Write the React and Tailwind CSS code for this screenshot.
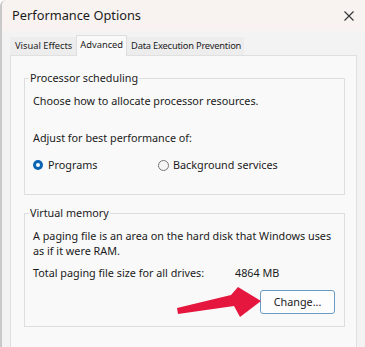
export default function App() {
  return (
    <div className="relative w-[365px] h-[347px] overflow-hidden bg-[#f3f3f3] border-l-2 border-[#c9c9c9] rounded-tl-[6px] flex flex-col text-[#1b1b1b] font-['Noto_Sans',sans-serif]">
      {/* title bar */}
      <div className="h-[31px] shrink-0 bg-[#f8f3f1] flex items-center justify-between pl-[10px] pr-[11px]">
        <span className="text-[12.8px] leading-none">Performance Options</span>
        <svg width="10" height="10" viewBox="0 0 10 10" className="text-[#333]">
          <path d="M0.5 0.5 L9.5 9.5 M9.5 0.5 L0.5 9.5" stroke="currentColor" strokeWidth="1.1" fill="none" />
        </svg>
      </div>
      {/* tabs */}
      <div className="mt-[4px] ml-[8px] flex items-end h-[20px] text-[9.3px] leading-none whitespace-nowrap">
        <div className="h-[18px] pl-[5px] pr-[4px] flex items-center bg-[#ededed]">Visual Effects</div>
        <div className="h-[21px] px-[3px] flex items-center pb-[3px] bg-[#f9f9f9] border border-b-0 border-[#dedede] relative z-10 -mb-[1px]">Advanced</div>
        <div className="h-[18px] pl-[4px] pr-[3px] flex items-center bg-[#ededed] tracking-[-0.2px]">Data Execution Prevention</div>
      </div>
      {/* panel */}
      <div className="ml-[8px] w-[347px] flex-1 bg-[#f9f9f9] border border-b-0 border-[#e0e0e0] pl-[13px] pr-[11px] text-[10.8px] whitespace-nowrap">
        <fieldset className="mt-[14px] border border-[#dedede] pl-[8px] pr-[8px] pb-[21px]">
          <legend className="-ml-[4px] px-[1px] leading-[16px]">Processor scheduling</legend>
          <div className="mt-[7px] leading-[16px]">Choose how to allocate processor resources.</div>
          <div className="mt-[21px] leading-[16px]">Adjust for best performance of:</div>
          <div className="mt-[11px] flex items-center leading-[16px]">
            <div className="w-[125px] flex items-center">
              <span className="w-[10px] h-[10px] rounded-full bg-[#0a64b4] flex items-center justify-center mr-[5px]">
                <span className="w-[4px] h-[4px] rounded-full bg-white"></span>
              </span>
              <span>Programs</span>
            </div>
            <div className="flex items-center">
              <span className="w-[11px] h-[11px] rounded-full border border-[#777] bg-[#f6f6f6] mr-[4px]"></span>
              <span>Background services</span>
            </div>
          </div>
        </fieldset>
        <fieldset className="mt-[10px] border border-[#dedede] pl-[8px] pr-[9px] pb-[12px]">
          <legend className="-ml-[4px] px-[1px] leading-[16px]">Virtual memory</legend>
          <div className="mt-[7px] leading-[15px]">
            A paging file is an area on the hard disk that Windows uses
            <br />
            as if it were RAM.
          </div>
          <div className="mt-[7px] flex leading-[16px]">
            <span className="w-[202px]">Total paging file size for all drives:</span>
            <span>4864 MB</span>
          </div>
          <div className="mt-[9px] flex justify-end">
            <button className="w-[75px] h-[24px] rounded-[3px] border border-[#6a9bc2] bg-[#fdfdfd] text-[10.8px] leading-none">
              Change...
            </button>
          </div>
        </fieldset>
      </div>
      {/* red annotation arrow */}
      <svg className="absolute left-0 top-0 pointer-events-none" width="365" height="347" viewBox="0 0 365 347">
        <polygon
          points="175,308 229,295 236,287 259,301 238,317 232,306 176,314"
          fill="#e5173f"
        />
      </svg>
    </div>
  );
}
